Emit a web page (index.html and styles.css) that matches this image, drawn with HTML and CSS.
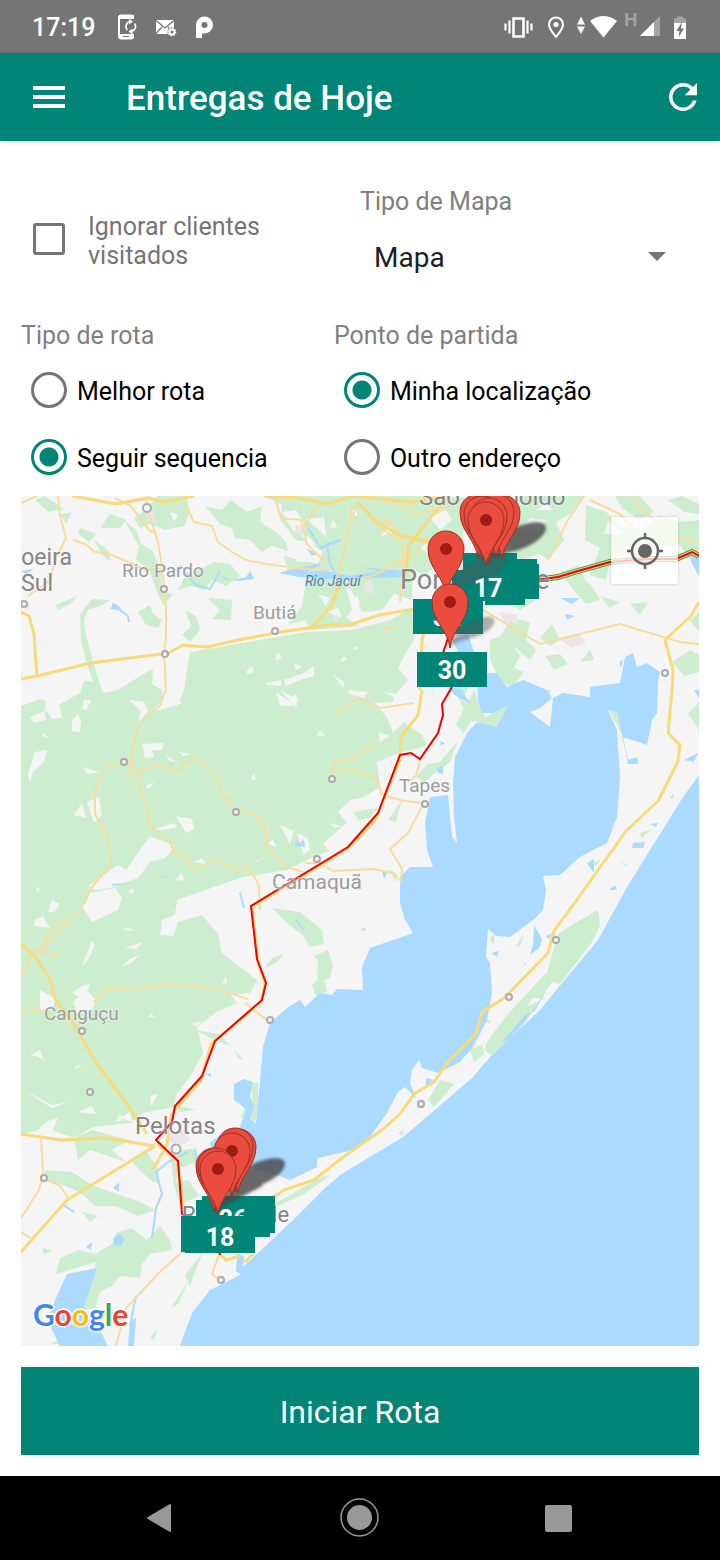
FILE: index.html
```html
<!DOCTYPE html>
<html lang="pt-BR">
    <head>
        <meta charset="utf-8">
        <meta name="viewport" content="width=device-width, initial-scale=1">
        <title>Entregas de Hoje</title>
        <link rel="stylesheet" href="styles.css">
    </head>
    <body>
        <div class="status-bar">
            <span class="clock">17:19</span>
            <svg class="status-left" width="96" height="28" viewBox="117 12 96 28">
                <!-- phone sync -->
                <path d="M133 18v-1.500a2 2 0 0 0-2-2h-10a2 2 0 0 0-2 2v19a2 2 0 0 0 2 2h10a2 2 0 0 0 2-2v-2" fill="none" stroke="#fff" stroke-width="2"/>
                <path d="M119 14h15v4h-15zM119 33h15v4h-15z" fill="#fff"/>
                <path d="M123 35.500h6" stroke="#757575"/>
                <path d="M130 20.500a5 5 0 0 0-2.500 8.500M131.500 30.500a5 5 0 0 0 3-8" fill="none" stroke="#fff" stroke-width="1.600"/>
                <path d="M129 18l4 2.500-4 3zM132.500 27.500v6l-4-3z" fill="#fff"/>
                <!-- mail -->
                <path d="M156 19h18v14h-18z" fill="#fff"/>
                <path d="M156 19.500l9 7.500 9-7.500M156 32.500l6-6.500M174 32.500l-6-6.500" fill="none" stroke="#757575" stroke-width="1.300"/>
                <circle cx="172" cy="31" r="4.500" fill="#757575"/>
                <circle cx="172" cy="31" r="2.500" fill="none" stroke="#fff" stroke-width="2"/>
                <circle cx="172" cy="31" r="3.600" fill="none" stroke="#fff" stroke-width="1.500" stroke-dasharray="1.400 1.400"/>
                <!-- p badge -->
                <path d="M196 37V24a8.500 8.500 0 1 1 8.500 8.500H202V37z" fill="#fff"/>
                <circle cx="204.500" cy="24" r="3" fill="#757575"/>
            </svg>
            <svg class="status-right" width="184" height="36" viewBox="503 8 184 36">
                <!-- vibrate -->
                <path d="M513.500 17.500h10v18h-10z" fill="none" stroke="#fff" stroke-width="2.600"/>
                <path d="M509.500 19.500v13M505.500 22.500v7M527.500 19.500v13M531.500 22.500v7" stroke="#fff" stroke-width="2.200"/>
                <!-- location -->
                <path d="M556 36c-4-5-7-8.500-7-12.500a7 7 0 0 1 14 0c0 4-3 7.500-7 12.500z" fill="none" stroke="#fff" stroke-width="2"/>
                <circle cx="556" cy="23.500" r="2.600" fill="#fff"/>
                <!-- wifi -->
                <path d="M577 23.500l4-8 4 8zM577 25.500l4 7.500 4-7.500z" fill="#fff"/>
                <path d="M590 20q13.500-10 27 0l-13.500 16.500z" fill="#fff"/>
                <!-- signal -->
                <text x="624" y="25" class="net-type">H</text>
                <path d="M660 15v20h-20z" fill="#a3a3a3"/>
                <path d="M654 21v14h-14z" fill="#fff"/>
                <!-- battery -->
                <path d="M677 15.500h6v2h3v5h-12v-5h3z" fill="#a3a3a3"/>
                <path d="M674 22h12v16h-12z" fill="#fff"/>
                <path d="M682 21l-5.500 9h3l-1 6 5.500-8.500h-3z" fill="#757575"/>
            </svg>
        </div>

        <header class="app-bar">
            <button type="button" class="icon-btn" aria-label="Menu">
                <svg width="32" height="24" viewBox="0 0 32 24"><path d="M0 3h32M0 12h32M0 21h32" stroke="#fff" stroke-width="4"/></svg>
            </button>
            <h1>Entregas de Hoje</h1>
            <button type="button" class="icon-btn" aria-label="Atualizar">
                <svg width="28" height="28" viewBox="4 4 16 16"><path fill="#fff" d="M17.650 6.350A7.960 7.960 0 0 0 12 4a8 8 0 1 0 7.730 10h-2.080A6 6 0 1 1 12 6c1.660 0 3.140.69 4.220 1.780L13 11h7V4z"/></svg>
            </button>
        </header>

        <main class="content">
            <form class="options">
                <div class="top-row">
                    <label class="check"><input type="checkbox" name="ignorar"><span>Ignorar clientes visitados</span></label>
                    <div class="map-type">
                        <label class="caption" for="tipoMapa">Tipo de Mapa</label>
                        <div class="select-wrap">
                            <select id="tipoMapa">
                                <option>Mapa</option>
                            </select>
                        </div>
                    </div>
                </div>
                <div class="route-row">
                    <fieldset>
                        <legend class="caption">Tipo de rota</legend>
                        <label class="radio"><input type="radio" name="rota"><span>Melhor rota</span></label>
                        <label class="radio"><input type="radio" name="rota" checked><span>Seguir sequencia</span></label>
                    </fieldset>
                    <fieldset>
                        <legend class="caption">Ponto de partida</legend>
                        <label class="radio"><input type="radio" name="partida" checked><span>Minha localização</span></label>
                        <label class="radio"><input type="radio" name="partida"><span>Outro endereço</span></label>
                    </fieldset>
                </div>
            </form>

            <div class="map">
                <svg class="map-svg" viewBox="21 496 678 850" preserveAspectRatio="xMidYMid slice">
                    <defs>
                        <g id="pin">
                            <path d="M0 0C-2-18-18-27-18-46A18 18 0 0 1 18-46C18-27 2-18 0 0z" fill="#ea4d3d" stroke="#9b2f25"/>
                            <circle cy="-46" r="6" fill="#9f1c14"/>
                        </g>
                        <g id="shade">
                            <path d="M0 0C4-16 12-28 28-36C44-43 60-44 60-36C60-28 46-18 32-14C18-10 8-8 0 0z"/>
                        </g>
                        <filter id="soft" x="-20%" y="-20%" width="140%" height="140%"><feGaussianBlur stdDeviation="1.500"/></filter>
                    </defs>

                    <!-- vegetation -->
                    <g fill="#cdeece">
                        <path d="M21 706L40 699 58 705 80 693 84 681 96 682 103 693 118 690 140 676 153 669 152 684 162 690 163 700 150 712 178 705 184 690 188 664 190 652 243 643 307 632 352 630 390 620 412 608 414 640 404 656 398 668 408 680 396 694 393 702 375 703 387 717 393 733 404 722 422 735 427 745 419 748 402 752 377 762 380 787 364 797 350 800 338 812 347 823 323 843 329 851 311 858 287 870 243 877 197 893 177 900 175 915 162 920 160 935 173 936 178 922 202 915 218 934 222 953 240 967 257 980 250 993 231 995 237 1003 216 1012 197 1027 203 1053 190 1077 177 1093 173 1107 143 1113 131 1123 93 1127 74 1138 46 1128 21 1135z"/>
                        <path d="M158 496L186 496 190 512 184 526 165 530 150 524 140 528 134 518 145 510zM100 528L110 514 126 520 120 528zM80 528L96 534 89 542 78 534zM35 500L45 496 64 509 48 512zM94 540L108 550 111 562 102 555zM124 520L136 530 141 544 152 550 161 572 163 591 173 594 164 606 156 590 150 570 136 560 139 546z"/>
                        <path d="M205 506L222 510 231 500 247 512 262 506 260 522 276 532 286 542 288 551 272 546 262 552 250 540 235 538 232 528 220 524zM263 496L415 496 412 600 394 594 382 610 362 612 350 588 335 590 340 577 318 580 306 570 288 572 284 556 300 560 318 564 323 552 308 542 296 540 288 530 280 520 282 504zM415 496L468 498 462 545 425 575 404 566 410 530z"/>
                        <path d="M306 580L324 575 346 588 352 610 346 618 360 626 310 630 306 620 288 624 302 606zM214 562L230 564 240 576 226 586 212 580 204 590 190 586 178 590 186 574 198 570zM208 598L232 600 231 620 212 619 220 610zM185 610L196 616 200 630 190 642 182 635 191 626zM138 612L150 605 153 614 162 620 158 628 146 625zM80 614L92 599 110 600 105 604 88 610 84 620 86 635 93 662 102 690 96 690 86 661 81 640zM55 605L77 596 72 603 58 610zM60 514L72 512 66 524z"/>
                        <path d="M500 530L520 496 586 496 570 514 556 522 564 540 548 560 540 554 520 560zM586 505L606 512 620 525 642 530 660 516 680 522 699 520 699 548 690 560 680 545 640 548 610 560 606 580 590 575 600 548 585 540zM615 496L640 496 654 512 640 520 622 508zM668 500L682 496 699 504 699 514 684 512zM560 572L578 566 585 580 592 586 600 600 586 604 575 592zM512 618L530 622 526 640 536 650 530 660 516 648 506 656 500 636zM490 640L506 634 520 656 514 668 524 672 512 688 500 680 490 660zM455 650L475 656 484 676 470 684 462 700 482 716 466 724 464 734 456 724 464 710 455 690zM540 638L552 624 560 640 550 646zM545 656L560 654 568 664 554 670zM580 662L590 650 594 660zM600 596L620 602 610 608zM630 604L648 602 640 615zM672 662L690 650 699 655 699 672 684 676zM690 620L699 612 699 632zM688 714L699 702 699 730zM498 574L520 580 536 600 520 610 505 600z"/>
                        <!-- around the lagoon -->
                        <path d="M477 722L493 713 507 706 497 728zM462 712L474 690 486 720 470 722 465 732zM522 713L532 690 552 690 536 706zM608 708L616 702 627 716 625 740zM632 720L634 698 642 716zM416 776L428 764 440 762 458 741 450 762 436 772 424 783zM388 820L402 800 396 822zM360 830L381 852 370 840zM388 868L397 874 396 882zM354 812L378 808 370 818 358 820zM272 908L300 912 322 930 324 944 309 947 304 936 288 924zM314 956L328 950 333 965 330 978 324 980 327 991 316 996 312 985 317 980 318 962z"/>
                        <path d="M251 1083L258 1082 258 1110 255 1122 249 1116 253 1106zM240 1118L250 1098 252 1112zM195 1030L220 1034 230 1046 214 1040zM172 1104L196 1110 180 1112zM234 1050L244 1060 238 1058zM264 968L272 958 284 954 276 963zM490 938L495 933 493 946zM516 947L523 934 521 945zM558 934L580 920 598 910 600 926 592 942 560 984 545 980z"/>
                        <path d="M545 974L556 976 520 1030 493 1056 484 1050 488 1040 508 1014zM532 998L528 1006 545 998zM470 1050L482 1044 484 1054 474 1062zM440 1080L454 1084 434 1107 428 1100zM486 1021l7-1-4 4zM398 1134l4-4 2 5zM591 863l10-3-6 6zM640 833l12-4-10 9zM621 862l6 2 0 3z"/>
                        <!-- south -->
                        <path d="M74 1138L92 1130 130 1140 112 1150 126 1162 90 1150 78 1160zM45 1170L72 1172 92 1185 120 1195 140 1202 156 1210 138 1216 116 1206 95 1206 80 1192 45 1178zM130 1160L145 1150 158 1168 160 1184 150 1180 136 1166zM170 1152L196 1148 198 1162 180 1168 176 1182 188 1180 200 1196 180 1204 174 1186zM116 1233L132 1228 147 1240 160 1226 170 1240 172 1250 150 1254 142 1264 140 1278 120 1276 112 1286 100 1292 95 1308 82 1310 92 1280 96 1262 56 1274 60 1258 78 1250 95 1254 112 1244zM185 1275L200 1256 202 1254 190 1286zM171 1308L190 1278 178 1304zM150 1338L158 1328 154 1340zM82 1212L98 1216 90 1222zM270 1206L320 1178 332 1174 304 1194 278 1206zM50 1343L74 1336 70 1346zM42 1247l10 4-8 3z"/>
                    </g>

                    <!-- open fields inside the green -->
                    <g fill="#f5f5f5">
                        <path d="M30 717L46 711 45 699 60 706 62 718 52 719 44 707 46 720 34 723zM72 720L78 714 81 722 80 732 72 731zM42 736L43 732 49 739zM35 752L47 750 44 762 33 772 30 782 28 774zM82 708L84 700 91 700 86 711zM129 700L144 702 148 712 138 722 141 711zM74 815L82 803 86 818zM87 802L99 797 102 815 94 823zM142 744L164 743 162 750 152 750 154 757 145 758zM166 755L178 763 168 760zM179 752L192 754 183 756zM82 767L99 772 88 774zM145 786L154 782 149 789zM176 816L192 819 194 829 186 833zM155 829L174 823 178 827 162 830zM280 825L294 831 290 844zM297 833L308 838 310 850 303 855zM330 823l12 3-8 2zM316 736l4-6 5 6zM251 779l3-6 2 7zM268 844l5-5 3 8zM255 862l10-6-8 6zM291 699l4-5 4 7zM170 704l9-6 2 6z"/>
                        <path d="M88 886L118 865 126 870 150 836 175 846 165 858 150 862 138 878 110 888 96 890zM82 906L90 893 115 888 122 898 118 910 92 922zM176 880l5-7 4 8zM194 862l8-4 4 6zM184 906L193 903 215 886 234 892 240 904 220 908 218 896 198 904 190 915zM223 935L234 930 248 944 256 962 240 967 230 956zM48 912l4-12 8 4-6 8zM35 920l8-4 7 12-16-2zM36 886l4 4-3 2zM128 892l5-4 1 6z"/>
                        <path d="M82 966L92 940 95 945 88 960zM72 993L82 986 90 984 87 992 82 999zM73 1002L86 990 96 1000 91 1012 78 1014zM40 1010L40 990 56 999 52 1010zM122 930l6-3 6 4zM125 948l18-6-7 7zM122 966l8-7 10-4-9 8zM150 1013l6 5-7-1zM190 1024l12-3-5 5zM208 1014l6 6-1 4zM222 984l4-8 1 7zM30 1056l10-6 4 10-8-4zM74 1067l8-3-5 5zM22 1089l30 16 16-3-16 6zM150 1096l8-2-7 12zM120 1118l10-6 2 10zM92 1106l-14 6 18 2zM36 1132l10-10 12-4-6 14zM115 1122l5-8 3 6z"/>
                        <path d="M246 672l6-6 2 6-6 2zM275 660l3-8 4 6zM266 683l15-3 0 6-14-1zM284 680l18-6 12-8 0 10-14 4-14 6zM294 663l8 4-6 3zM332 674l12 8 0 6zM340 662l4-6 3 4zM348 690l20 2-4 6-15-4zM296 706l-20-14 4 14zM355 646l4 3-6 1zM378 732l12 4-10 6zM382 692l20 2-6 4zM280 690l18 10-2 8z"/>
                        <path d="M282 512l14-2 8 14-10 8zM306 519l18-2 2 20-8-8zM300 532l10 6 6 8-10-4zM330 528l3-8 4 7zM380 536l10-10 2 8zM348 514l8-6 2 8zM295 556l12 6-10 0zM350 600l8-4 2 10zM430 518l16-8 6 10-12 10zM418 548l10-6 4 12zM170 512l8 2-4 8zM608 520l16 14-20 0zM520 528l10-10 16 2-10 14zM536 510l12-8 4 8zM318 594l12 4-4 8zM328 612l10-4 4 10z"/>
                    </g>

                    <!-- towns -->
                    <g fill="#ebe5ea">
                        <path d="M146 506l8 4 2 14-8-4zM296 525l10 2-2 8-9-2zM362 584l10-4 2 12-8 2zM500 612l16 2 2 10-14-2zM560 640l18-6 8 8-14 6zM164 1136l20-6 6 10-12 8zM24 604l6 0-2 6zM334 614l6 4-6 4z"/>
                    </g>

                    <!-- water -->
                    <g fill="#aadaff">
                        <path d="M699 775L683 797 655 842 627 887 598 940 558 988 540 1010 490 1057 473 1077 450 1097 403 1137 340 1175 323 1190 293 1220 243 1267 240 1275 210 1290 192 1313 180 1346 699 1346z"/>
                        <path d="M477 673L497 673 507 687 523 680 547 690 552 698 540 708 530 712 550 727 553 698 563 693 590 697 590 687 620 683 625 657 633 653 637 667 647 663 660 672 658 683 657 713 652 720 647 745 623 737 628 760 637 757 638 764 628 764 623 740 617 712 608 710 617 730 620 777 617 817 607 843 580 857 560 875 543 876 546 890 543 910 533 920 510 937 497 936 488 929 486 957 490 963 492 993 487 1020 473 1047 460 1062 438 1073 422 1068 419 1060 412 1070 410 1083 416 1098 405 1087 398 1092 387 1113 370 1137 353 1150 340 1153 317 1158 317 1167 290 1180 277 1175 232 1162 212 1150 210 1143 217 1137 240 1127 246 1110 240 1104 234 1100 234 1084 244 1079 253 1082 250 1096 254 1106 250 1118 256 1124 260 1080 263 1047 270 1023 287 1008 300 1000 305 1007 320 993 332 995 337 989 363 990 362 967 370 948 413 933 405 920 400 903 400 877 410 867 433 867 427 850 425 823 430 797 448 795 450 817 452 837 457 843 454 817 453 783 455 757 467 733 477 722 497 727 507 706 493 713 482 713 478 700z"/>
                        <path d="M452 640L468 634 474 652 460 655zM445 685L462 690 470 704 455 695zM684 760l14-7-4 9zM694 690l5 0 0 8zM619 662l4-2-2 8zM633 843l12-1-2 6-11 0zM587 863l7-4 0 14zM609 890l6-5 2 5-4 0zM650 824l8-1-2 4zM670 798l4-4-1 4zM533 945l1-20 8 14-2 8-10 8zM546 936l6-3-3 6zM491 953l8-2-2 6zM522 960l5 6-2-1zM437 768l6-2 0 8-5-1zM440 741l5 2-4 3zM382 872l6-1-4 8zM361 930l3-3 2 4zM295 846l2-6 3 3 4-4 1 8zM534 1012l-8 2-24 28 6-2 18-20 22-32zM426 1078l8 2-8 8z"/>
                        <path d="M67 1274L97 1268 84 1306 100 1330 108 1346 60 1346 48 1322 55 1300zM130 1322l6-4-2 28-6 0zM113 1238l6-4 6 4-4 8-7-1zM86 1247l6-5-1 8zM113 1188l6-6 0 10zM237 1254L244 1256 243 1274 236 1272zM110 609l4-6 8 6-6 1zM112 884l18-1-18 3zM158 877l12-1-10 2zM206 1074l5-1 0 4z"/>
                        <path d="M21 571l12-2-6 5zM222 576l10 4 14-3 4-6 4 8-16 2-14-2zM265 570l14 3 14-4 30-6-16 10 14-3 28 6 30-5-20-4 45 4 0 6-46 2-30 0-30-2zM306 548l12 6-6 2zM560 598l20 0-8 6zM565 614l10 2-8 4zM690 548l9 8 0 20-8-14zM496 558l4 8-2 3z"/>
                    </g>
                    <g class="stream">
                        <path d="M340 590l-4-16-6-10-3-20 14-4-20 8-13-20M180 565l16 20 14 4 10-18M112 604l16 12 1 6M152 1238l4-30 6-14-6-22 12-10 20-10M62 1204l12 8M195 1150l4 30M240 892l4 16M296 920l8 10M136 1296l-6 30"/>
                    </g>

                    <!-- roads -->
                    <g class="road">
                        <path d="M21 503l16-7M58 496l2 20 6 22-10 20-6 22-22 16M73 540l12 4 10 8 12 1 24 10 16 8 6-3 10 2M146 500l2 10 10 32 4 24 4 40 0 30-2 18 2 36-6 16-14 10-8 12-6 24-2 20-4 8M115 498l16 8 18 24 8 4M186 506l8 16 18 4 6 16 14 10 14 8 20 4 30 4 30 2M275 498l6 20 20 2 6 24 18 18M384 628l12 0M318 505l-14 22M352 505l-4 30-10 40-2 14M346 583l28-8 28-14M357 505l-8 20M360 504l14 18 26 20"/>
                        <path d="M105 772l-6 6-4 16 0 20 14 26 2 24-20 24-6 14-16 20-20 20-18 14-10 20M105 768l26-7M132 765l5 8 20-8 20 6 18-14 24 24 0 8 16 20 20 6 10 12 2 20 20 20 20 6M137 770l2 20 8 16 2 20 20 14 6 14 8 0 8 12 12 0 12-6 20 8 14-2 10 20 1 24"/>
                        <path d="M336 714l22-16 22 10 34-5M332 778l2-16 14-2 28-16M334 772l16-3 26 8 6 18 22 6 22 2M424 803l-16 30-18 16 12 20-1 12-8-8-20-4-40 2-14-8-14 0M420 760l-4 16-8 6M94 1002l8-10 12-4 16 2 24-4 18-2 24 2 30 6 22 7M245 1003l22 17M21 1010l20 0 14 10M41 1138l2 34-4 18-14 22-4 6M40 1176l20 10 8 12M182 1252l-22 20-34 36-10 38M60 955l-14-2M40 956l8-22 18-16M220 1252l-8 22 10 8M21 1232l10 6M400 602l4-40-4-30-18-16M440 590l40 18 60 36 80-20 60 18 19 2M390 500l26 14 40-10M395 562l20-6 12-20M548 560l20-40 16-24M590 500l30 14 18 20M610 548l50 12 39-10M630 496l40 40 29 6"/>
                    </g>
                    <g class="highway">
                        <path d="M21 612l8 4 5 18 1 16 2 26M21 679l20-4 50-12 78-10 14-8 24 2 36-8 44-8 42-6 20 0 30-10 60-10M312 627l20-22 8-24M72 496l44 8 32-6 16 4 30-6M264 496l34 2 30 6 24-8 60 6 30-6M357 502l20 20 24 14 30 6M448 496l-40 50-2 30"/>
                        <path d="M21 943l16 16 14 22 4 18 20 27 22 38 26 34 24 36M21 1134l40 6 44-2 50 8M155 1146l-88 54-46 52M422 690l-4 25-17 22-1 22-24 60-26 28-98 60 6 55 7 22-4 18-50 42-10 36-30 35-4 30-14 24M157 1144l20 16 7 50M672 690l-4 43 12 12-2 16-20 40-32 30-50 70-22 30-6 22-44 45-22 14-6 22-28 28-14 20-20 12-14 20-18 16-40 28-28 22-30 10-24 16-20 20M699 602l-8 14-26 24 8 30-1 22M430 610l-8 30-2 50M218 1252l8 8 14-4M245 1262l8-8"/>
                    </g>

                    <!-- place dots -->
                    <g class="dot">
                        <circle cx="147" cy="508" r="4"/><circle cx="164" cy="589" r="3"/><circle cx="165" cy="654" r="3"/><circle cx="275" cy="631" r="3"/><circle cx="24" cy="604" r="3"/>
                        <circle cx="124" cy="762" r="3"/><circle cx="236" cy="812" r="3"/><circle cx="332" cy="779" r="3"/><circle cx="317" cy="859" r="3"/><circle cx="425" cy="804" r="3"/>
                        <circle cx="665" cy="673" r="3"/><circle cx="556" cy="940" r="3"/><circle cx="509" cy="997" r="3"/><circle cx="421" cy="1104" r="3"/><circle cx="270" cy="1020" r="3"/>
                        <circle cx="82" cy="1031" r="3"/><circle cx="90" cy="1092" r="3"/><circle cx="176" cy="1149" r="4.500"/><circle cx="44" cy="1178" r="3"/><circle cx="221" cy="1280" r="3"/>
                    </g>

                    <!-- route -->
                    <path class="route-alt" d="M536 580l22-3 20-6 32-9 40-3 26 0 16-7 7 4"/>
                    <path class="route-alt inner" d="M536 580l22-3 20-6 32-9 40-3 26 0 16-7 7 4"/>
                    <path class="route thin" d="M536 580l22-3 20-6 32-9 40-3 26 0 16-7 7 4"/>
                    <path class="route" d="M450 632L442 656M452 687L442 704 443 715 438 733 420 759 411 753 400 755 378 813 348 847 251 906 257 959 266 983 262 1000 215 1041 202 1076 175 1106 172 1122 156 1140 178 1161 182 1214 218 1240 220 1255"/>

                    <g class="place">
                        <text x="419" y="505" font-size="24">São Leopoldo</text>
                        <text x="400" y="589" font-size="27">Porto Alegre</text>
                        <text x="72" y="565" font-size="23" text-anchor="end">Cachoeira</text>
                        <text x="53" y="591" font-size="23" text-anchor="end">do Sul</text>
                        <text x="135" y="1134" font-size="24">Pelotas</text>
                        <text x="182" y="1222" font-size="22">Rio Grande</text>
                    </g>
                    <g class="place small">
                        <text x="122" y="577">Rio Pardo</text>
                        <text x="253" y="619">Butiá</text>
                        <text x="399" y="792">Tapes</text>
                        <text x="272" y="889" font-size="21">Camaquã</text>
                        <text x="44" y="1020">Canguçu</text>
                    </g>
                    <text class="river" x="305" y="586">Rio Jacuí</text>

                    <!-- north stops -->
                    <g fill="#008577">
                        <path d="M452 570h11v-17h54v6h20v5h2v35h-14v6h-40v-4h-33z"/>
                        <rect x="413" y="599" width="70" height="35"/>
                        <rect x="417" y="652" width="70" height="35"/>
                    </g>
                    <g fill="#444" opacity=".8" filter="url(#soft)">
                        <use href="#shade" x="486" y="564"/>
                    </g>
                    <g fill="#555" opacity=".45" filter="url(#soft)">
                        <use href="#shade" x="447" y="596"/>
                        <use href="#shade" x="450" y="648" transform="translate(112 162) scale(.75)"/>
                    </g>
                    <g class="tag">
                        <text x="488" y="597">17</text>
                        <text x="447" y="626">32</text>
                        <text x="452" y="679">30</text>
                    </g>
                    <use href="#pin" x="502" y="559"/>
                    <use href="#pin" x="496" y="558"/>
                    <use href="#pin" x="478" y="558"/>
                    <use href="#pin" x="482" y="560"/>
                    <use href="#pin" x="489" y="562"/>
                    <use href="#pin" x="486" y="566"/>
                    <use href="#pin" x="446" y="595"/>
                    <use href="#pin" x="450" y="648"/>

                    <!-- south stops -->
                    <path d="M196 1200h6v-4h73v37h-5v4h-74z" fill="#008577"/>
                    <g fill="#444" opacity=".8" filter="url(#soft)">
                        <use href="#shade" x="225" y="1200"/>
                        <path d="M218 1212C225 1190 240 1178 262 1178L262 1186C246 1196 230 1200 218 1212z"/>
                    </g>
                    <text class="tag" x="233" y="1228">26</text>
                    <use href="#pin" x="238" y="1193"/>
                    <use href="#pin" x="235" y="1192"/>
                    <use href="#pin" x="232" y="1197"/>
                    <use href="#pin" x="214" y="1212"/>
                    <use href="#pin" x="216" y="1212"/>
                    <use href="#pin" x="218" y="1215"/>
                    <path d="M181 1216h74v37h-70v-1h-4z" fill="#008577"/>
                    <text class="tag" x="220" y="1246">18</text>

                    <text class="google" x="33" y="1326"><tspan fill="#4285f4">G</tspan><tspan fill="#ea4335">o</tspan><tspan fill="#fbbc05">o</tspan><tspan fill="#4285f4">g</tspan><tspan fill="#34a853">l</tspan><tspan fill="#ea4335">e</tspan></text>
                </svg>
                <button type="button" class="locate" aria-label="Minha localização">
                    <svg width="38" height="38" viewBox="0 0 38 38"><g stroke="#666" fill="none" stroke-width="2.500"><circle cx="19" cy="19" r="13"/><path d="M19 1v6M19 31v6M1 19h6M31 19h6"/></g><circle cx="19" cy="19" r="7" fill="#666"/></svg>
                </button>
            </div>

            <button type="button" class="start-btn">Iniciar Rota</button>
        </main>

        <nav class="nav-bar">
            <button type="button" aria-label="Voltar">
                <svg width="40" height="40" viewBox="0 0 40 40"><path d="M8 20L30 7v26z" fill="#999" stroke="#999" stroke-width="2" stroke-linejoin="round"/></svg>
            </button>
            <button type="button" aria-label="Início">
                <svg width="40" height="40" viewBox="0 0 40 40"><circle cx="19.500" cy="19.500" r="18.500" fill="none" stroke="#999" stroke-width="1.500"/><circle cx="19.500" cy="19.500" r="12.500" fill="#999"/></svg>
            </button>
            <button type="button" aria-label="Recentes">
                <svg width="40" height="40" viewBox="0 0 40 40"><rect x="5" y="7" width="27" height="27" rx="2" fill="#999"/></svg>
            </button>
        </nav>
    </body>
</html>
```

FILE: styles.css
```css
* {
    box-sizing: border-box;
}

body {
    margin: 0;
    min-height: 100vh;
    display: flex;
    flex-direction: column;
    background-color: #fff;
    font-family: Roboto, "Noto Sans", sans-serif;
    font-size: 25px;
    line-height: 29px;
    color: #000;
}

button {
    padding: 0;
    border: 0;
    background: none;
    font-family: inherit;
    cursor: pointer;
}

svg {
    display: block;
}

/* android status bar */
.status-bar {
    display: flex;
    align-items: center;
    height: 53px;
    padding: 0 33px 0 32px;
    background-color: #757575;
    color: #fff;
}

.clock {
    padding-top: 2px;
    font-weight: 500;
}

.status-left {
    margin-left: 22px;
}

.status-right {
    margin-left: auto;
}

.net-type {
    font-size: 19px;
    font-weight: 700;
    fill: #a3a3a3;
}

.app-bar {
    display: flex;
    align-items: center;
    height: 88px;
    padding: 0 23px 0 33px;
    background-color: #008577;
    box-shadow: 0 1px 4px rgba(0, 0, 0, 0.2);
}

.app-bar h1 {
    flex: 1;
    margin: 0 0 0 61px;
    padding-top: 3px;
    color: #fff;
    font-size: 35px;
    line-height: 40px;
    font-weight: 500;
}

.content {
    flex: 1;
    display: flex;
    flex-direction: column;
    padding: 46px 21px 21px;
}

.top-row {
    display: grid;
    grid-template-columns: 1fr 1fr;
    align-items: center;
    margin-bottom: 26px;
}

.check {
    display: flex;
    align-items: center;
    gap: 23px;
    padding: 0 60px 0 12px;
    color: #757575;
}

.check input {
    appearance: none;
    flex: none;
    width: 32px;
    height: 32px;
    margin: 0 0 4px;
    border: 3px solid #757575;
    border-radius: 3px;
}

.check input:checked {
    background-color: #008577;
    border-color: #008577;
}

.caption {
    display: block;
    padding: 0;
    color: #808080;
}

.map-type {
    padding-bottom: 10px;
}

.select-wrap {
    position: relative;
    margin-top: 13px;
}

.select-wrap::after {
    content: "";
    position: absolute;
    right: 33px;
    top: 23px;
    border: 9px solid transparent;
    border-top-color: #757575;
    border-bottom: 0;
    pointer-events: none;
}

.select-wrap select {
    appearance: none;
    width: 100%;
    height: 56px;
    padding: 0 14px;
    border: 0;
    background: none;
    color: #212121;
    font-family: inherit;
    font-size: 28px;
}

.route-row {
    display: grid;
    grid-template-columns: 6fr 7fr;
    margin-bottom: 5px;
}

fieldset {
    margin: 0;
    padding: 0;
    border: 0;
    min-width: 0;
}

legend {
    margin-bottom: 6px;
}

.radio {
    display: flex;
    align-items: center;
    gap: 10px;
    height: 67px;
    padding-left: 10px;
}

.radio:last-child {
    margin-bottom: 1px;
}

.radio span {
    padding-top: 3px;
}

.radio input {
    appearance: none;
    width: 36px;
    height: 36px;
    margin: 0;
    border: 3px solid #757575;
    border-radius: 50%;
}

.radio input:checked {
    border-color: #008577;
    background: radial-gradient(circle, #008577 9px, transparent 10px);
}

/* map */
.map {
    position: relative;
    flex: 1;
    min-height: 400px;
    overflow: hidden;
    background-color: #f5f5f5;
}

.map-svg {
    position: absolute;
    inset: 0;
    width: 100%;
    height: 100%;
}

.road {
    fill: none;
    stroke: #f8dc9c;
    stroke-width: 2;
    stroke-linejoin: round;
}

.highway {
    fill: none;
    stroke: #f9d978;
    stroke-width: 3;
    stroke-linejoin: round;
}

.stream {
    fill: none;
    stroke: #aadaff;
    stroke-width: 2;
}

.dot {
    fill: #f5f5f5;
    stroke: #aaa;
    stroke-width: 2;
}

.route {
    fill: none;
    stroke: #f00000;
    stroke-width: 2;
}

.route-alt {
    fill: none;
    stroke: #4c9a3c;
    stroke-width: 6;
}

.route-alt.inner {
    stroke: #d5dc9a;
    stroke-width: 4;
}

.place {
    fill: #858585;
    stroke: #fff;
    stroke-opacity: 0.4;
    stroke-width: 2;
    paint-order: stroke;
}

.small {
    fill: #9c9c9c;
    font-size: 19px;
}

.river {
    fill: #4a7fc4;
    font-size: 14px;
    font-style: italic;
}

.tag {
    fill: #fff;
    font-size: 25px;
    font-weight: 700;
    text-anchor: middle;
}

.google {
    font-family: Lato, sans-serif;
    font-size: 30px;
    font-weight: 700;
    stroke: #fff;
    stroke-width: 3;
    paint-order: stroke;
}

.locate {
    position: absolute;
    top: 21px;
    right: 21px;
    display: grid;
    place-items: center;
    width: 67px;
    height: 67px;
    border-radius: 2px;
    background-color: rgba(255, 255, 255, 0.75);
    box-shadow: 0 0 3px rgba(0, 0, 0, 0.2);
}

.start-btn {
    height: 88px;
    margin-top: 21px;
    padding-top: 2px;
    background-color: #008577;
    color: #fff;
    font-size: 32px;
}

.nav-bar {
    display: flex;
    justify-content: center;
    align-items: center;
    gap: 160px;
    height: 84px;
    background-color: #000;
}
```
